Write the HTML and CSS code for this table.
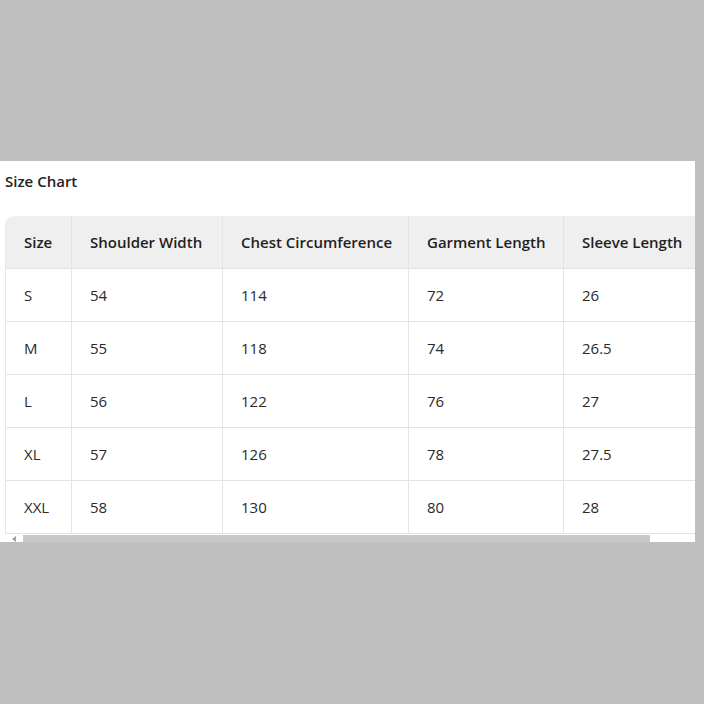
FILE: index.html
```html
<!DOCTYPE html>
<html>
<head>
<meta charset="utf-8">
<link rel="stylesheet" href="styles.css">
</head>
<body>
<div class="panel">
  <div class="title">Size Chart</div>
  <div class="scroller">
    <table class="chart">
      <colgroup>
        <col class="c1"><col class="c2"><col class="c3"><col class="c4"><col class="c5">
      </colgroup>
      <thead>
        <tr><th>Size</th><th>Shoulder Width</th><th>Chest Circumference</th><th>Garment Length</th><th>Sleeve Length</th></tr>
      </thead>
      <tbody>
        <tr><td>S</td><td>54</td><td>114</td><td>72</td><td>26</td></tr>
        <tr><td>M</td><td>55</td><td>118</td><td>74</td><td>26.5</td></tr>
        <tr><td>L</td><td>56</td><td>122</td><td>76</td><td>27</td></tr>
        <tr><td>XL</td><td>57</td><td>126</td><td>78</td><td>27.5</td></tr>
        <tr><td>XXL</td><td>58</td><td>130</td><td>80</td><td>28</td></tr>
      </tbody>
    </table>
  </div>
  <div class="scrollbar">
    <span class="arrow"></span>
    <span class="thumb"></span>
  </div>
</div>
</body>
</html>
```
FILE: styles.css
```css
html, body {
  margin: 0;
  padding: 0;
  background: #bfbfbf;
  width: 704px;
  height: 704px;
  overflow: hidden;
}
.panel {
  margin-top: 161px;
  width: 695px;
  height: 381px;
  background: #ffffff;
  overflow: hidden;
  position: relative;
  font-family: "Open Sans", "Noto Sans", sans-serif;
  color: #222;
}
.title {
  padding: 10px 0 0 5px;
  height: 55px;
  box-sizing: border-box;
  font-size: 15px;
  font-weight: 600;
  line-height: 20px;
}
.scroller {
  padding-left: 5px;
  height: 319px;
  overflow: hidden;
}
.chart {
  border-collapse: separate;
  border-spacing: 0;
  table-layout: fixed;
  width: 718px;
  border-left: 1px solid #e6e6e6;
  border-top-left-radius: 9px;
  font-size: 15px;
}
.c1 { width: 66px; }
.c2 { width: 151px; }
.c3 { width: 186px; }
.c4 { width: 155px; }
.c5 { width: 160px; }
.chart th, .chart td {
  height: 53px;
  box-sizing: border-box;
  padding: 0 0 0 18px;
  text-align: left;
  border-right: 1px solid #e4e4e4;
  border-bottom: 1px solid #e4e4e4;
  white-space: nowrap;
}
.chart th {
  background: #efefef;
  font-weight: 600;
  color: #1f1f1f;
}
.chart th:first-child {
  border-top-left-radius: 9px;
}
.chart td {
  font-weight: 400;
  color: #2a2a2a;
}
.scrollbar {
  position: absolute;
  left: 0;
  top: 374px;
  width: 695px;
  height: 7px;
  background: #ffffff;
}
.arrow {
  position: absolute;
  left: 12px;
  top: 1px;
  width: 0;
  height: 0;
  border-top: 3px solid transparent;
  border-bottom: 3px solid transparent;
  border-right: 4px solid #a0a0a0;
}
.thumb {
  position: absolute;
  left: 23px;
  top: 0;
  width: 627px;
  height: 7px;
  background: #c8c8c8;
}
```
